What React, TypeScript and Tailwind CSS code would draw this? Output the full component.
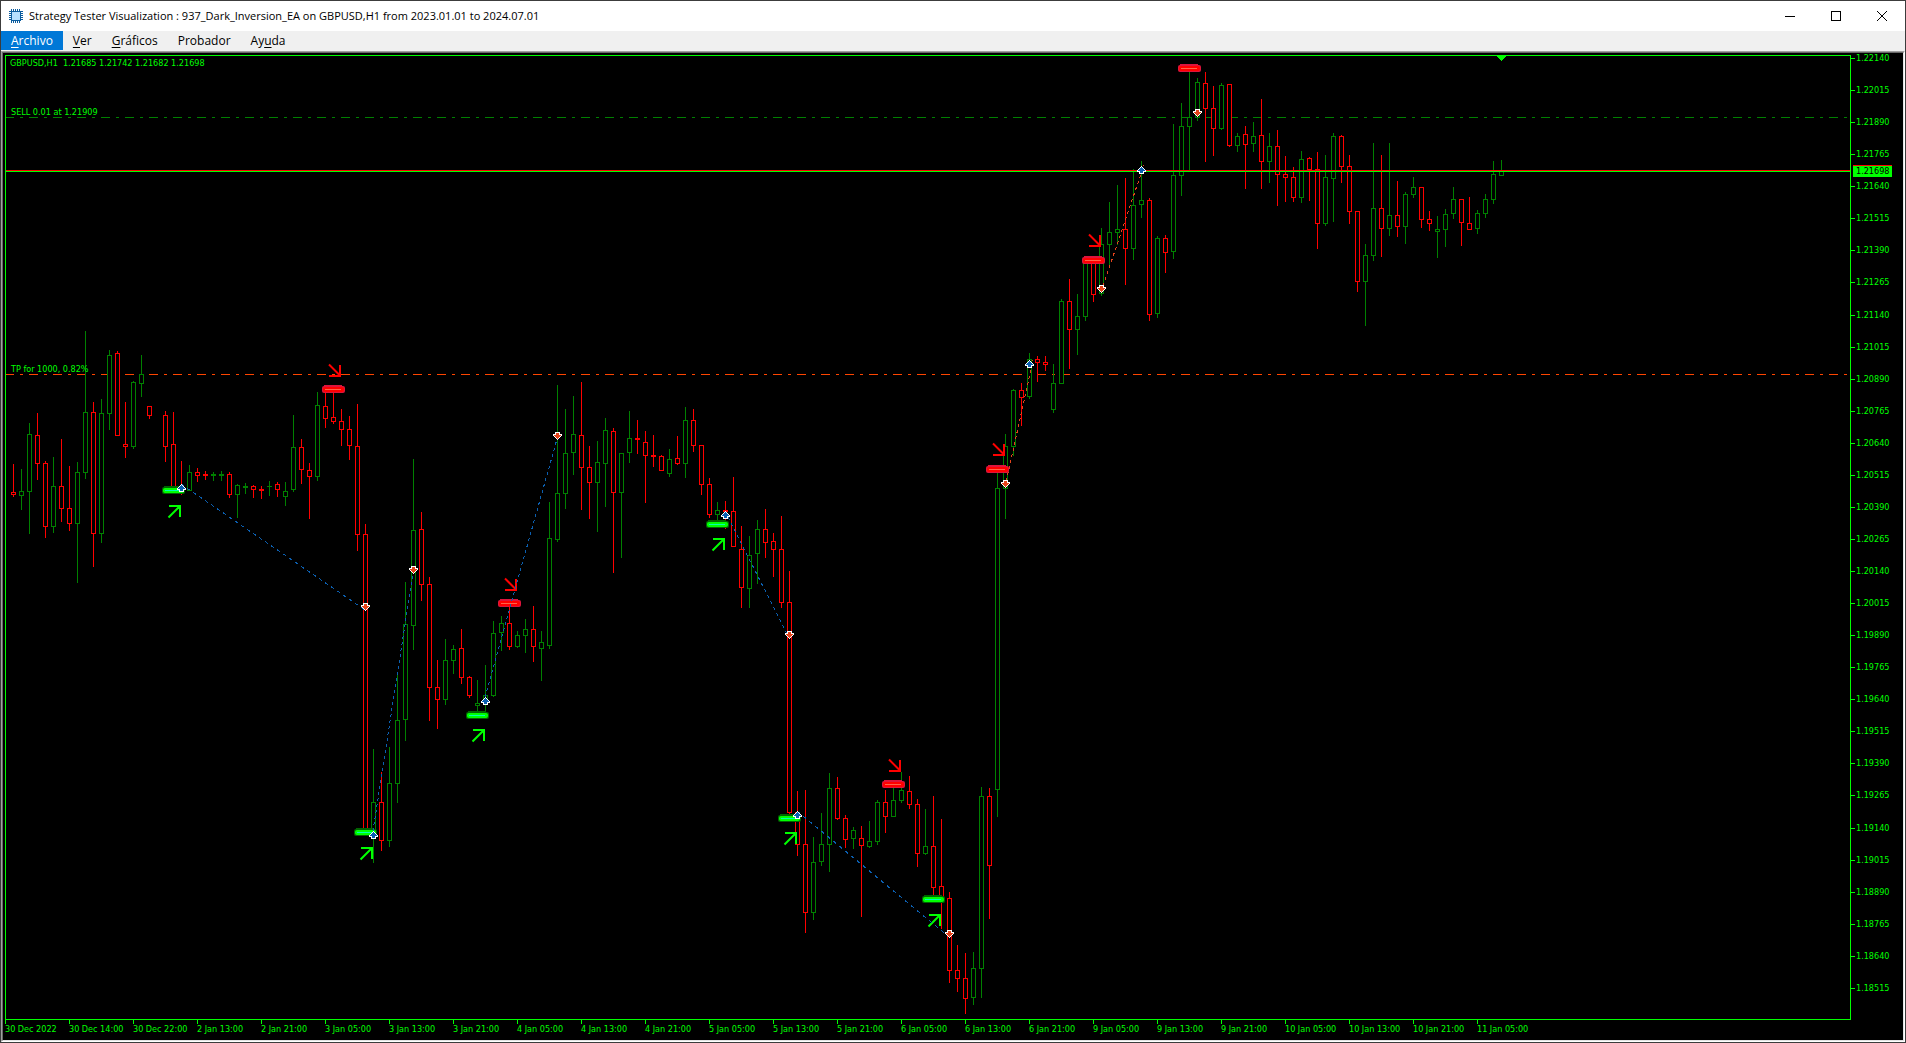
import { Fragment } from 'react';

type Candle = [x: number, side: 'u' | 'd', high: number, top: number, bottom: number, low: number];

const CANDLES: Candle[] = [
    [13, 'd', 464, 492, 494, 496], [21, 'u', 469, 491, 495, 509], [29, 'u', 423, 434, 491, 533],
    [37, 'd', 413, 435, 463, 479], [45, 'd', 461, 463, 526, 537], [53, 'u', 457, 486, 526, 532],
    [61, 'd', 439, 486, 508, 521], [69, 'd', 466, 508, 523, 530], [77, 'u', 462, 472, 523, 582],
    [85, 'u', 331, 412, 472, 478], [93, 'd', 402, 412, 533, 566], [101, 'u', 399, 413, 533, 542],
    [109, 'u', 350, 355, 413, 429], [117, 'd', 351, 353, 435, 435], [125, 'd', 402, 444, 446, 457],
    [133, 'u', 381, 382, 446, 448], [141, 'u', 355, 374, 383, 396], [149, 'd', 406, 406, 415, 418],
    [165, 'd', 411, 415, 446, 461], [173, 'd', 412, 444, 489, 490], [181, 'd', 461, 488, 490, 494],
    [189, 'u', 465, 472, 490, 490], [197, 'd', 468, 472, 475, 481], [205, 'd', 471, 474, 475, 479],
    [213, 'u', 472, 474, 475, 480], [221, 'u', 471, 474, 475, 480], [229, 'd', 472, 474, 494, 497],
    [237, 'u', 484, 485, 494, 517], [245, 'u', 483, 486, 487, 493], [253, 'd', 485, 486, 489, 497],
    [261, 'd', 486, 489, 490, 498], [269, 'u', 481, 486, 486, 495], [277, 'd', 482, 484, 489, 496],
    [285, 'u', 482, 491, 496, 505], [293, 'u', 415, 447, 489, 491], [301, 'd', 439, 447, 469, 483],
    [309, 'd', 463, 470, 476, 518], [317, 'u', 392, 405, 476, 480], [325, 'd', 391, 406, 418, 427],
    [333, 'd', 391, 417, 421, 423], [341, 'd', 409, 421, 429, 445], [349, 'd', 416, 429, 445, 459],
    [357, 'd', 404, 446, 534, 550], [365, 'd', 524, 534, 832, 834], [373, 'u', 749, 802, 834, 862],
    [381, 'd', 772, 802, 840, 850], [389, 'u', 747, 783, 840, 846], [397, 'u', 673, 720, 783, 802],
    [405, 'u', 582, 624, 719, 740], [413, 'u', 459, 530, 625, 649], [421, 'd', 512, 529, 584, 600],
    [429, 'd', 577, 584, 687, 720], [437, 'd', 660, 687, 699, 728], [445, 'u', 639, 660, 699, 704],
    [453, 'u', 645, 649, 660, 673], [461, 'd', 629, 648, 677, 683], [469, 'd', 676, 677, 695, 697],
    [477, 'u', 680, 703, 705, 711], [485, 'u', 665, 695, 703, 711], [493, 'u', 621, 633, 695, 696],
    [501, 'u', 616, 623, 632, 650], [509, 'd', 606, 623, 646, 649], [517, 'u', 631, 635, 646, 647],
    [525, 'u', 619, 629, 635, 652], [533, 'd', 606, 629, 646, 661], [541, 'u', 631, 642, 648, 680],
    [549, 'u', 502, 538, 645, 648], [557, 'u', 385, 493, 539, 541], [565, 'u', 409, 453, 493, 508],
    [573, 'u', 396, 434, 452, 474], [581, 'd', 382, 435, 467, 509], [589, 'd', 446, 467, 482, 518],
    [597, 'u', 441, 462, 482, 531], [605, 'u', 418, 430, 463, 506], [613, 'd', 428, 431, 492, 572],
    [621, 'u', 453, 453, 492, 557], [629, 'u', 411, 438, 452, 462], [637, 'd', 420, 438, 439, 453],
    [645, 'd', 431, 442, 455, 502], [653, 'd', 435, 455, 456, 466], [661, 'd', 455, 456, 470, 470],
    [669, 'u', 449, 459, 473, 476], [677, 'd', 436, 458, 463, 464], [685, 'u', 407, 420, 463, 477],
    [693, 'd', 409, 420, 445, 451], [701, 'd', 445, 445, 484, 494], [709, 'd', 478, 484, 514, 517],
    [717, 'u', 502, 510, 514, 520], [725, 'd', 501, 510, 511, 528], [733, 'd', 477, 511, 546, 546],
    [741, 'd', 526, 549, 587, 607], [749, 'u', 536, 555, 588, 607], [757, 'u', 520, 529, 553, 583],
    [765, 'd', 509, 529, 542, 557], [773, 'd', 533, 541, 549, 576], [781, 'd', 516, 549, 602, 607],
    [789, 'd', 571, 602, 812, 813], [797, 'd', 791, 812, 844, 855], [805, 'd', 790, 844, 912, 932],
    [813, 'u', 837, 862, 912, 919], [821, 'u', 813, 844, 861, 865], [829, 'u', 773, 788, 844, 871],
    [837, 'd', 777, 788, 818, 819], [845, 'd', 815, 818, 839, 847], [853, 'u', 827, 830, 838, 848],
    [861, 'd', 826, 838, 845, 916], [869, 'u', 821, 841, 846, 847], [877, 'u', 800, 802, 841, 844],
    [885, 'd', 790, 802, 816, 832], [893, 'u', 787, 800, 816, 816], [901, 'u', 772, 790, 800, 802],
    [909, 'd', 776, 791, 804, 808], [917, 'd', 799, 804, 853, 866], [925, 'u', 809, 846, 853, 854],
    [933, 'd', 796, 846, 887, 896], [941, 'd', 819, 886, 898, 928], [949, 'd', 892, 898, 970, 982],
    [957, 'd', 945, 970, 978, 991], [965, 'd', 953, 978, 998, 1013], [973, 'u', 952, 968, 997, 1004],
    [981, 'u', 787, 796, 968, 997], [989, 'd', 788, 796, 865, 918], [997, 'u', 470, 488, 789, 816],
    [1005, 'u', 434, 446, 488, 518], [1013, 'u', 389, 390, 446, 455], [1021, 'd', 383, 390, 397, 425],
    [1029, 'u', 353, 359, 396, 398], [1037, 'd', 356, 359, 362, 381], [1045, 'd', 356, 362, 364, 370],
    [1053, 'u', 364, 383, 409, 412], [1061, 'u', 299, 301, 383, 383], [1069, 'd', 279, 301, 329, 368],
    [1077, 'u', 294, 316, 329, 354], [1085, 'u', 258, 261, 316, 320], [1093, 'd', 258, 261, 294, 301],
    [1101, 'u', 228, 244, 293, 295], [1109, 'u', 202, 232, 244, 266], [1117, 'u', 185, 229, 232, 244],
    [1125, 'd', 178, 229, 248, 284], [1133, 'u', 169, 205, 248, 259], [1141, 'u', 161, 200, 204, 217],
    [1149, 'd', 198, 200, 314, 320], [1157, 'u', 236, 238, 313, 317], [1165, 'd', 235, 238, 252, 272],
    [1173, 'u', 124, 175, 251, 258], [1181, 'u', 103, 126, 175, 195], [1189, 'u', 72, 117, 126, 171],
    [1197, 'u', 78, 82, 117, 120], [1205, 'd', 72, 83, 108, 161], [1213, 'd', 86, 108, 128, 155],
    [1221, 'u', 83, 85, 128, 129], [1229, 'd', 84, 84, 145, 146], [1237, 'u', 133, 136, 145, 151],
    [1245, 'd', 126, 134, 144, 188], [1253, 'u', 122, 136, 143, 151], [1261, 'd', 99, 135, 161, 188],
    [1269, 'u', 133, 146, 161, 182], [1277, 'd', 130, 146, 174, 205], [1285, 'd', 156, 174, 177, 201],
    [1293, 'd', 167, 177, 197, 201], [1301, 'u', 151, 159, 197, 202], [1309, 'd', 157, 158, 169, 200],
    [1317, 'd', 152, 169, 223, 248], [1325, 'u', 155, 177, 223, 225], [1333, 'u', 133, 136, 178, 221],
    [1341, 'd', 135, 136, 166, 182], [1349, 'd', 155, 166, 211, 223], [1357, 'd', 211, 211, 281, 291],
    [1365, 'u', 244, 255, 281, 325], [1373, 'u', 143, 208, 255, 260], [1381, 'd', 155, 208, 228, 256],
    [1389, 'u', 143, 215, 228, 235], [1397, 'd', 181, 215, 226, 236], [1405, 'u', 192, 194, 226, 243],
    [1413, 'u', 177, 187, 194, 197], [1421, 'd', 187, 187, 219, 227], [1429, 'd', 211, 219, 223, 230],
    [1437, 'u', 216, 229, 231, 257], [1445, 'u', 209, 214, 229, 246], [1453, 'u', 187, 199, 213, 218],
    [1461, 'd', 199, 199, 222, 245], [1469, 'd', 197, 223, 229, 229], [1477, 'u', 210, 213, 228, 233],
    [1485, 'u', 194, 199, 213, 217], [1493, 'u', 161, 174, 199, 203], [1501, 'u', 160, 171, 175, 175],
];

// signal bars: x, y of the middle line, y of the arrow (null when there is none)
const BUY_SIGNALS = [
    [173, 490, 505], [365, 832, 847], [477, 715, 729], [717, 524, 538], [789, 818, 832], [933, 899, 914],
];
const SELL_SIGNALS = [
    [333, 389, 364], [509, 603, 578], [893, 784, 759], [997, 469, 443], [1093, 260, 234], [1189, 68, null],
];

const BUY_DEALS = [[181, 488], [373, 835], [485, 701], [725, 515], [797, 815], [1029, 364], [1141, 170]];
const SELL_DEALS = [[365, 606], [413, 569], [557, 435], [789, 634], [949, 933], [1005, 483], [1101, 288], [1197, 112]];

const TRADES = [
    { from: [181, 484], to: [365, 610], color: '#0b5fb0' },
    { from: [373, 831], to: [413, 573], color: '#0b5fb0' },
    { from: [485, 697], to: [557, 439], color: '#0b5fb0' },
    { from: [725, 511], to: [789, 638], color: '#0b5fb0' },
    { from: [797, 811], to: [949, 937], color: '#0b5fb0' },
    { from: [1005, 487], to: [1033, 360], color: '#e5431b' },
    { from: [1101, 292], to: [1144, 165], color: '#e5431b' },
];

const PRICES = Array.from({ length: 30 }, (_, i) => ((122140 - i * 125) / 100000).toFixed(5));

const TIMES = [
    '30 Dec 2022', '30 Dec 14:00', '30 Dec 22:00', '2 Jan 13:00', '2 Jan 21:00',
    ...[3, 4, 5, 6, 9, 10].flatMap((d) => [`${d} Jan 05:00`, `${d} Jan 13:00`, `${d} Jan 21:00`]),
    '11 Jan 05:00',
];

const MENU = [
    { pre: '', key: 'A', post: 'rchivo' },
    { pre: '', key: 'V', post: 'er' },
    { pre: '', key: 'G', post: 'ráficos' },
    { pre: 'Probador', key: '', post: '' },
    { pre: 'Ay', key: 'u', post: 'da' },
];

function ChipIcon() {
    return (
        <svg width="14" height="14" viewBox="0 0 14 14" shapeRendering="crispEdges" aria-hidden="true">
            {[3, 5, 7, 9, 11].map((p) => (
                <Fragment key={p}>
                    <rect x={p - 1} y="0" width="1" height="14" fill="#0b5c9e" />
                    <rect x="0" y={p - 1} width="14" height="1" fill="#0b5c9e" />
                </Fragment>
            ))}
            <rect x="2" y="2" width="10" height="10" fill="#0b5c9e" />
            <rect x="3" y="3" width="8" height="8" fill="#b5dfff" />
        </svg>
    );
}

function Bar({ x, y, buy }: { x: number; y: number; buy: boolean }) {
    return (
        <g>
            <rect x={x - 9} y={y - 4} width="18" height="3" fill={buy ? '#006400' : '#dc143c'} />
            <rect x={x - 11} y={y - 3} width="23" height="7" rx="2" fill={buy ? '#006400' : '#dc143c'} />
            <rect x={x - 10} y={y - 2} width="21" height="5" rx="2" fill={buy ? '#00ff00' : '#ff0000'} />
            <rect x={x - 8} y={y} width="16" height="1" fill={buy ? '#00ffb0' : '#ff6347'} />
        </g>
    );
}

function Arrow({ x, y, buy }: { x: number; y: number; buy: boolean }) {
    return (
        <g transform={`translate(${x - 5} ${y})`} fill="none">
            <path d={buy ? 'M1 1.5H12.5V12' : 'M1 11.5H12.5V1'} stroke={buy ? '#008c00' : '#a00000'} strokeWidth="1" />
            <path d={buy ? 'M1 1H12V12M.5 12.5L11.5 1.5' : 'M1 12H12V1M1 .5L12 11.5'} stroke={buy ? '#00ff00' : '#ff0000'} strokeWidth="2" />
        </g>
    );
}

function Deal({ x, y, buy }: { x: number; y: number; buy: boolean }) {
    return (
        <g transform={buy ? `translate(${x} ${y - 4})` : `translate(${x} ${y + 5}) scale(1 -1)`} shapeRendering="crispEdges">
            <path d="M0 0h1v1h1v1h1v1h1v1h1v2h-2v2h-5v-2h-2v-2h1v-1h1v-1h1v-1h1z" fill="#ffffff" />
            <path d="M0 1h1v1h1v1h1v1h1v1h-2v2h-3v-2h-2v-1h1v-1h1v-1h1z" fill={buy ? '#0b5fb0' : '#e5431b'} />
        </g>
    );
}

function Trade({ from: [x1, y1], to: [x2, y2], color }: { from: number[]; to: number[]; color: string }) {
    // three pixels on, three off, counted along the longer axis
    const dash = (3 * Math.hypot(x2 - x1, y2 - y1)) / Math.max(Math.abs(x2 - x1), Math.abs(y2 - y1));
    return <line x1={x1} y1={y1} x2={x2} y2={y2} stroke={color} strokeDasharray={dash} />;
}

function Chart() {
    return (
        <svg className="block h-full w-full font-['DejaVu_Sans_Condensed','DejaVu_Sans',sans-serif] text-[9px]" role="img" aria-label="GBPUSD H1">
            <g transform="translate(-6 -56)">
                <g shapeRendering="crispEdges">
                    <line x1="5" y1="117.5" x2="101%" y2="117.5" stroke="#008000" strokeDasharray="9 6 3 6" />
                    <line x1="5" y1="374.5" x2="101%" y2="374.5" stroke="#ff4500" strokeDasharray="9 6 3 6" />
                </g>
                <g shapeRendering="crispEdges">
                    {CANDLES.map(([x, side, high, top, bottom, low]) => {
                        const color = side === 'u' ? '#008000' : '#ff0000';
                        return (
                            <g key={x}>
                                <rect x={x} y={high} width="1" height={low - high + 1} fill={color} />
                                <rect x={x - 2} y={top} width="5" height={bottom - top + 1} fill={color} />
                                {bottom - top > 1 && (
                                    <rect x={x - 1} y={top + 1} width="3" height={bottom - top - 1} fill="#000000" />
                                )}
                            </g>
                        );
                    })}
                </g>
                <g shapeRendering="crispEdges">
                    <rect x="6" y="170" width="100%" height="1" fill="#ff0000" />
                    <rect x="6" y="171" width="100%" height="1" fill="#00ff00" />
                    <path d="M1497 56h9l-4 5h-1z" fill="#00ff00" />
                </g>
                {BUY_SIGNALS.map(([x, y, arrow]) => (
                    <Fragment key={x}>
                        <Bar x={x} y={y} buy />
                        <Arrow x={x} y={arrow} buy />
                    </Fragment>
                ))}
                {SELL_SIGNALS.map(([x, y, arrow]) => (
                    <Fragment key={x}>
                        <Bar x={x!} y={y!} buy={false} />
                        {arrow !== null && <Arrow x={x!} y={arrow} buy={false} />}
                    </Fragment>
                ))}
                <g shapeRendering="crispEdges">
                    {TRADES.map((t) => <Trade key={t.from[0]} {...t} />)}
                </g>
                {BUY_DEALS.map(([x, y]) => <Deal key={x} x={x} y={y} buy />)}
                {SELL_DEALS.map(([x, y]) => <Deal key={x} x={x} y={y} buy={false} />)}
                <g fill="#00ff00">
                    <text x="10" y="66" className="whitespace-pre">{'GBPUSD,H1  1.21685 1.21742 1.21682 1.21698'}</text>
                    <text x="11" y="115">SELL 0.01 at 1.21909</text>
                    <text x="11" y="372">TP for 1000, 0.82%</text>
                </g>
            </g>
        </svg>
    );
}

export default function App() {
    return (
        <div className="flex h-screen flex-col overflow-hidden border border-[#3c3c3c] bg-white font-['Open_Sans','Noto_Sans',sans-serif] text-xs text-black">
            <header className="flex h-[30px] shrink-0 items-center">
                <div className="flex flex-1 items-center gap-1.5 pl-2">
                    <ChipIcon />
                    <h1 className="text-[11px]">Strategy Tester Visualization : 937_Dark_Inversion_EA on GBPUSD,H1 from 2023.01.01 to 2024.07.01</h1>
                </div>
                <div className="flex h-full">
                    <button aria-label="Minimizar" className="flex w-[46px] items-center justify-center">
                        <svg width="10" height="10" shapeRendering="crispEdges"><path d="M0 5.5h10" stroke="#000" /></svg>
                    </button>
                    <button aria-label="Maximizar" className="flex w-[46px] items-center justify-center">
                        <svg width="10" height="10" shapeRendering="crispEdges"><path d="M.5 .5h9v9h-9z" stroke="#000" fill="none" /></svg>
                    </button>
                    <button aria-label="Cerrar" className="flex w-[46px] items-center justify-center">
                        <svg width="10" height="10"><path d="M0 0l10 10M10 0L0 10" stroke="#000" /></svg>
                    </button>
                </div>
            </header>

            <nav className="flex h-5 shrink-0 items-start bg-[#f0f0f0]">
                {MENU.map(({ pre, key, post }, i) => (
                    <button
                        key={pre + key}
                        className={i === 0 ? 'h-[19px] bg-[#0078d7] px-2.5 text-white' : 'h-[19px] px-2.5'}
                    >
                        {pre}<u className="underline-offset-2">{key}</u>{post}
                    </button>
                ))}
            </nav>

            <main className="flex min-h-0 flex-1 border border-t-[#a0a0a0] border-r-white border-b-white border-l-[#a0a0a0]">
                <div className="flex min-w-0 flex-1 flex-col border border-t-[#696969] border-r-[#e3e3e3] border-b-[#e3e3e3] border-l-[#696969] bg-black pt-0.5 pl-0.5 font-['DejaVu_Sans_Condensed','DejaVu_Sans',sans-serif] text-[9px] text-[#00ff00]">
                    <div className="flex min-h-0 flex-1">
                        <div className="min-w-0 flex-1 border border-[#00ff00]">
                            <Chart />
                        </div>
                        <div className="relative w-[52px] shrink-0">
                            <ul className="flex h-full flex-col justify-between pb-7">
                                {PRICES.map((p) => (
                                    <li key={p} className="flex h-[7px] items-center gap-[1px] leading-[7px]">
                                        <span className="h-px w-1 bg-[#00ff00]" />
                                        {p}
                                    </li>
                                ))}
                            </ul>
                            <span className="absolute top-[110px] left-0.5 h-3 w-[39px] border-t border-[#ff0000] bg-[#00ff00] pl-[3px] leading-[11px] text-black">
                                1.21698
                            </span>
                        </div>
                    </div>
                    <ul className="flex h-5 shrink-0 overflow-hidden">
                        {TIMES.map((t) => (
                            <li key={t} className="w-16 shrink-0 whitespace-nowrap">
                                <span className="block h-1 w-px bg-[#00ff00]" />
                                <span className="block leading-[10px]">{t}</span>
                            </li>
                        ))}
                    </ul>
                </div>
            </main>
        </div>
    );
}
